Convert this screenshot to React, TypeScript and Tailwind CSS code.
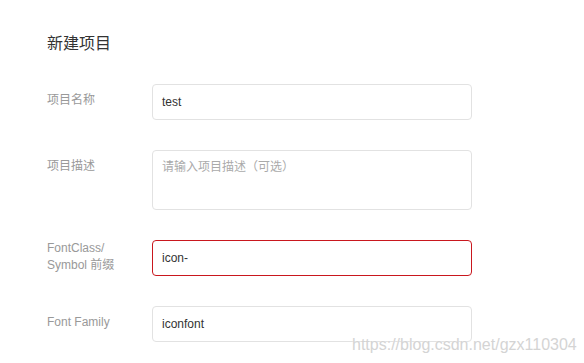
const fontStack = { fontFamily: '"Liberation Sans", "Noto Sans CJK SC", sans-serif' };

interface Field {
  label: string[];
  value?: string;
  placeholder?: string;
  multiline?: boolean;
  error?: boolean;
}

const fields: Field[] = [
  { label: ['项目名称'], value: 'test' },
  { label: ['项目描述'], placeholder: '请输入项目描述（可选）', multiline: true },
  { label: ['FontClass/', 'Symbol 前缀'], value: 'icon-', error: true },
  { label: ['Font Family'], value: 'iconfont' },
];

export default function App() {
  return (
    <div className="relative w-[584px] h-[363px] bg-white overflow-hidden" style={fontStack}>
      <div className="pl-[47px] pt-[32px]">
        <h1 className="text-[16px] leading-[24px] text-[#333] mb-[28px]">新建项目</h1>

        <div className="flex flex-col gap-[30px]">
          {fields.map((f, i) => (
            <div key={i} className="flex items-start">
              <div
                className={`w-[105px] shrink-0 text-[12px] text-[#999] ${
                  f.label.length > 1 ? 'pt-0 leading-[17px]' : 'pt-[7px] leading-[18px]'
                }`}
              >
                {f.label.map((l, j) => (
                  <div key={j}>{l}</div>
                ))}
              </div>
              {f.multiline ? (
                <div className="w-[320px] h-[60px] border border-[#e2e2e2] rounded-[4px] px-[9px] pt-[7px] text-[12px] leading-[18px] text-[#aaa]">
                  {f.placeholder}
                </div>
              ) : (
                <div
                  className={`w-[320px] h-[36px] flex items-center rounded-[4px] px-[9px] text-[12px] text-[#333] border ${
                    f.error ? 'border-[#c9171e]' : 'border-[#e2e2e2]'
                  }`}
                >
                  {f.value}
                </div>
              )}
            </div>
          ))}
        </div>
      </div>

      <div
        className="absolute left-[352px] top-[335px] text-[16px] leading-[20px] text-[#d4d4d4]"
        style={{ textShadow: '0 0 1px #fff' }}
      >
        https://blog.csdn.net/gzx110304
      </div>
    </div>
  );
}
